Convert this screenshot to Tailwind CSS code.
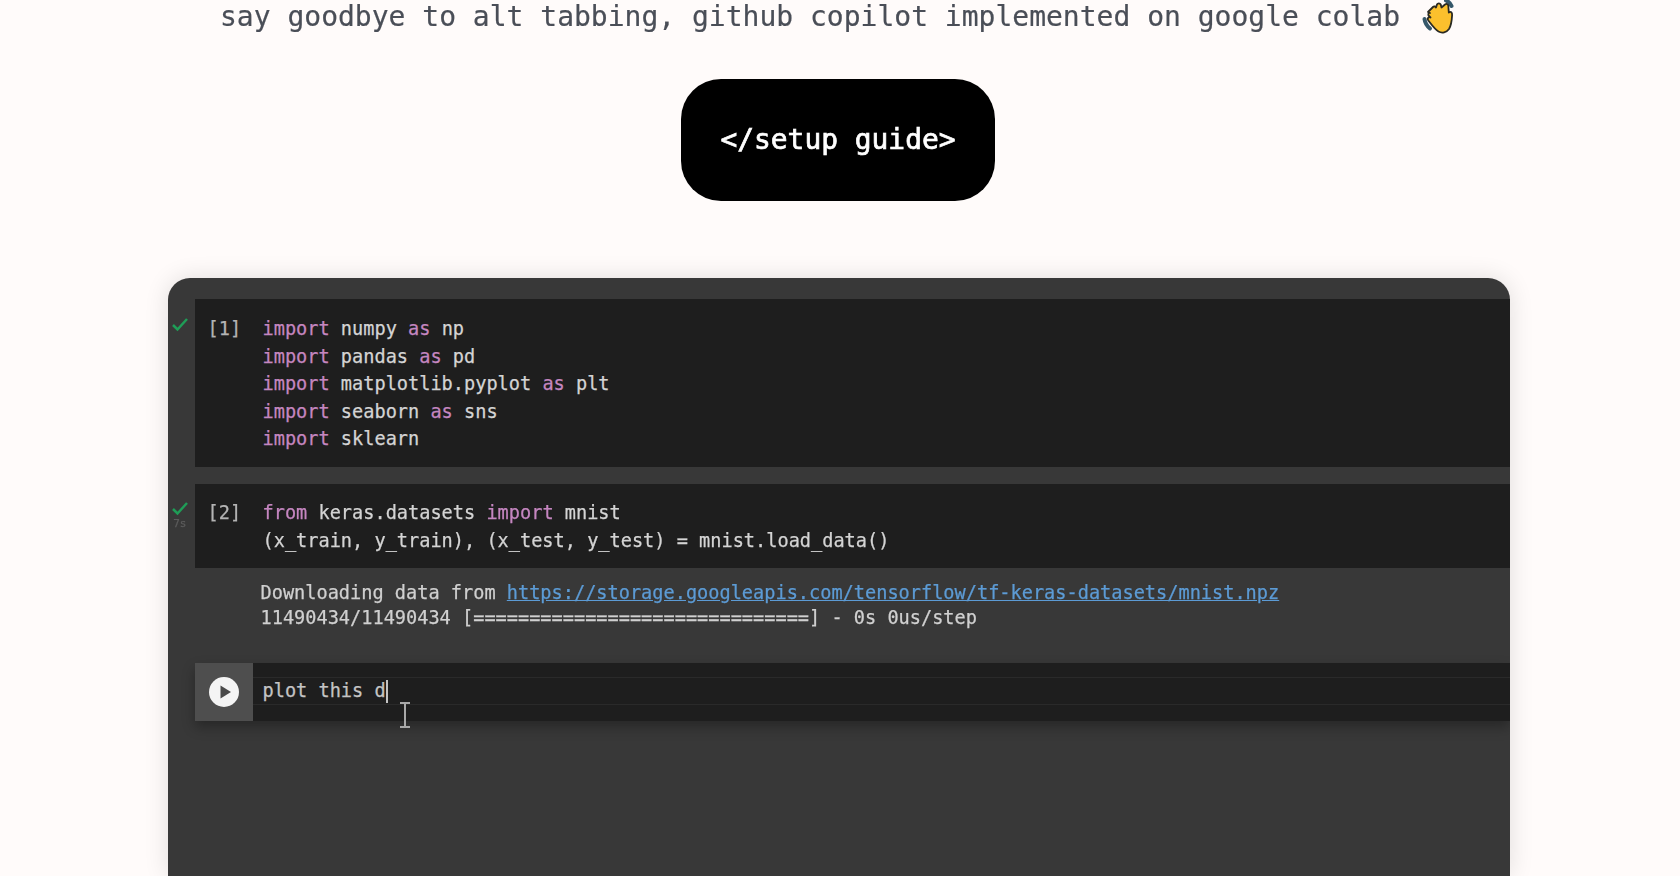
<!DOCTYPE html>
<html lang="en">
<head>
  <meta charset="UTF-8" />
  <title>setup guide</title>
  <script src="https://cdn.jsdelivr.net/npm/@tailwindcss/browser@4"></script>
</head>
<body class="bg-[#fffbfa] h-[876px] overflow-hidden flex flex-col items-center font-['DejaVu_Sans_Mono',monospace]">
  <!-- tagline -->
  <div class="h-[34px] w-full flex justify-center items-center gap-[22px] pr-[4px] shrink-0">
    <h2 class="text-[28px] leading-8 text-[#4a4e57] whitespace-nowrap blur-[0.4px] [-webkit-text-stroke:0.2px]">say goodbye to alt tabbing, github copilot implemented on google colab</h2>
    <svg class="w-[34px] h-[36px] shrink-0" viewBox="0 0 34 36">
      <path d="M2.500 20c.5 4 2.500 7 5.500 9.500" fill="none" stroke="#36586a" stroke-width="4" stroke-linecap="round"/>
      <path d="M24 1.500c2.500 1 4.500 3 5.500 5.500" fill="none" stroke="#36586a" stroke-width="4" stroke-linecap="round"/>
      <path d="M6 13l5-5c1-1 2.500-.5 3 .5l1-3c.7-1.500 3-1.500 3.700 0l.8 3 3.500-3c1.500-1 3-.5 3.300 1l.5 7c2-1.500 3.500 0 3.300 2.500-.3 5-.5 10-3.100 14-2.500 3.500-7 4.500-10.500 2.500-4-2.500-7-7-10.500-11.500-1.300-1.700 1-3.500 2.500-2.500l-1.500-1.500c-1.500-1.500-.5-3.500 1-3z" fill="#fbc02d" stroke="#2a2a22" stroke-width="1.800" stroke-linejoin="round"/>
    </svg>
  </div>

  <a class="mt-[45px] mr-[4px] w-[314px] h-[122px] shrink-0 rounded-[40px] bg-black text-white flex items-center justify-center text-[27.9px] blur-[0.3px] [-webkit-text-stroke:0.7px]">&lt;/setup guide&gt;</a>

  <!-- notebook recording -->
  <div class="relative mt-[77px] mr-[3px] w-[1342px] flex-1 rounded-t-[22px] bg-[#383838] overflow-hidden pt-[21px] text-[18.6px] leading-[27.5px] text-[#d4d4d4] shadow-[0_0_24px_rgba(0,0,0,0.12)]">
    <div class="blur-[0.6px] [-webkit-text-stroke:0.25px]">
      <div class="flex">
        <div class="w-[27px] shrink-0 flex justify-end pr-[6px] pt-[16px]">
          <svg class="w-[18px] h-[18px]" viewBox="0 0 18 18"><path d="M2 10l4.500 4.500L16 4" fill="none" stroke="#1f9d57" stroke-width="2.500"/></svg>
        </div>
        <div class="flex-1 bg-[#1e1e1e] h-[168px] pt-[16px] flex">
          <span class="w-[68px] pl-[13px] shrink-0 text-[#b4b4b4]">[1]</span>
          <pre class="font-['DejaVu_Sans_Mono',monospace]"><span class="text-[#c586c0]">import</span> numpy <span class="text-[#c586c0]">as</span> np
<span class="text-[#c586c0]">import</span> pandas <span class="text-[#c586c0]">as</span> pd
<span class="text-[#c586c0]">import</span> matplotlib.pyplot <span class="text-[#c586c0]">as</span> plt
<span class="text-[#c586c0]">import</span> seaborn <span class="text-[#c586c0]">as</span> sns
<span class="text-[#c586c0]">import</span> sklearn</pre>
        </div>
      </div>

      <div class="flex mt-[17px]">
        <div class="w-[27px] shrink-0 flex flex-col items-end pr-[6px] pt-[15px]">
          <svg class="w-[18px] h-[18px]" viewBox="0 0 18 18"><path d="M2 10l4.500 4.500L16 4" fill="none" stroke="#1f9d57" stroke-width="2.500"/></svg>
          <span class="text-[11px] leading-[14px] pr-[2px] text-[#5c5c5c]">7s</span>
        </div>
        <div class="flex-1 bg-[#1e1e1e] h-[84px] pt-[15px] flex">
          <span class="w-[68px] pl-[13px] shrink-0 text-[#b4b4b4]">[2]</span>
          <pre class="font-['DejaVu_Sans_Mono',monospace]"><span class="text-[#c586c0]">from</span> keras.datasets <span class="text-[#c586c0]">import</span> mnist
(x_train, y_train), (x_test, y_test) = mnist.load_data()</pre>
        </div>
      </div>

      <pre class="pl-[93px] pt-[12px] leading-[25px] text-[#d0d0d0] font-['DejaVu_Sans_Mono',monospace]">Downloading data from <span class="text-[#5c9bd5] underline">https://storage.googleapis.com/tensorflow/tf-keras-datasets/mnist.npz</span>
11490434/11490434 [==============================] - 0s 0us/step</pre>

      <div class="flex ml-[27px] mt-[33px] h-[58px] shadow-[0_6px_12px_rgba(0,0,0,0.3)]">
        <div class="w-[58px] shrink-0 bg-[#4e4e4e] flex items-center justify-center">
          <svg class="w-[32px] h-[32px]" viewBox="0 0 32 32"><circle cx="16" cy="16" r="15" fill="#f4f4f4"/><path d="M12.500 9.500v13L23 16z" fill="#4a4a4a"/></svg>
        </div>
        <div class="flex-1 bg-[#1e1e1e] flex flex-col">
          <div class="h-[15px] border-b border-[#2a2a2a]"></div>
          <div class="h-[26px] pl-[10px] flex items-center text-[#c4c4c4]">
            <span>plot this d</span><span class="w-[2px] h-[23px] bg-[#c4c4c4]"></span>
          </div>
          <div class="flex-1 border-t border-[#2a2a2a]"></div>
        </div>
      </div>
    </div>

    <!-- mouse cursor -->
    <svg class="absolute left-[230px] top-[423px] w-[14px] h-[28px]" viewBox="0 0 14 28"><path d="M2 2h10M7 2v24M2 26h10" fill="none" stroke="#a8a8a8" stroke-width="2"/></svg>
  </div>
</body>
</html>
